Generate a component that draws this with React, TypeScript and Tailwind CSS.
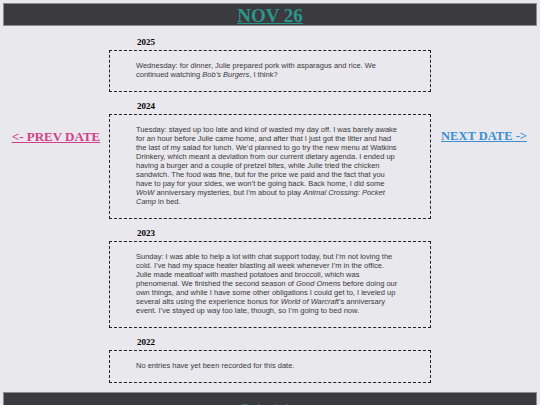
import React from 'react';

type Entry = {
    year: string;
    body: React.ReactNode;
};

const entries: Entry[] = [
    {
        year: '2025',
        body: (
            <>
                Wednesday: for dinner, Julie prepared pork with asparagus and rice. We continued watching <i>Bob’s Burgers</i>, I think?
            </>
        ),
    },
    {
        year: '2024',
        body: (
            <>
                Tuesday: stayed up too late and kind of wasted my day off. I was barely awake for an hour before Julie came home, and after
                that I just got the litter and had the last of my salad for lunch. We’d planned to go try the new menu at Watkins Drinkery,
                which meant a deviation from our current dietary agenda. I ended up having a burger and a couple of pretzel bites, while
                Julie tried the chicken sandwich. The food was fine, but for the price we paid and the fact that you have to pay for your
                sides, we won’t be going back. Back home, I did some <i>WoW</i> anniversary mysteries, but I’m about to play{' '}
                <i>Animal Crossing: Pocket Camp</i> in bed.
            </>
        ),
    },
    {
        year: '2023',
        body: (
            <>
                Sunday: I was able to help a lot with chat support today, but I’m not loving the cold. I’ve had my space heater blasting
                all week whenever I’m in the office. Julie made meatloaf with mashed potatoes and broccoli, which was phenomenal. We
                finished the second season of <i>Good Omens</i> before doing our own things, and while I have some other obligations I
                could get to, I leveled up several alts using the experience bonus for <i>World of Warcraft</i>’s anniversary event. I’ve
                stayed up way too late, though, so I’m going to bed now.
            </>
        ),
    },
    {
        year: '2022',
        body: <>No entries have yet been recorded for this date.</>,
    },
];

const serif = "font-['Liberation_Serif','Times_New_Roman',serif]";

export default function App() {
    return (
        <div className="min-h-screen bg-[#e9e8ed] p-[3px] pb-0">
            {/* Date heading bar */}
            <header className="h-[23px] border border-[#8c8c90] bg-[#3b3a3f] text-center">
                <a href="#" className={`${serif} text-[19px] leading-[21px] font-bold text-[#2b978c] underline decoration-[#2b978c]`}>
                    NOV 26
                </a>
            </header>

            <main className="grid grid-cols-[106px_322px_1fr]">
                <div className="flex justify-center">
                    <a href="#" className={`${serif} mt-[103px] h-fit text-[13px] leading-[15px] font-bold text-[#d23f8a] underline`}>
                        &lt;- PREV DATE
                    </a>
                </div>

                <div className="flex flex-col gap-[9px] pt-[11px] pb-[9px]">
                    {entries.map((entry) => (
                        <section key={entry.year}>
                            <h4 className={`${serif} mb-[3px] pl-[28px] text-[9px] leading-[10px] font-bold text-black`}>{entry.year}</h4>
                            <div className="border border-dashed border-[#222] pl-[26px] pr-[32px] pt-[10px] pb-[12px]">
                                <p className="font-['Liberation_Sans',Arial,sans-serif] text-[7.5px] leading-[9px] text-[#3a3a3c]">{entry.body}</p>
                            </div>
                        </section>
                    ))}
                </div>

                <div className="flex justify-center">
                    <a href="#" className={`${serif} mt-[103px] h-fit text-[12.5px] leading-[15px] font-bold text-[#3a8fd4] underline`}>
                        NEXT DATE -&gt;
                    </a>
                </div>
            </main>

            {/* Footer bar */}
            <footer className="h-[30px] border border-[#8c8c90] bg-[#3b3a3f] text-center">
                <a href="#" className={`${serif} text-[10px] leading-[12px] text-[#2b978c] underline`}>
                    Back to index
                </a>
            </footer>
        </div>
    );
}
